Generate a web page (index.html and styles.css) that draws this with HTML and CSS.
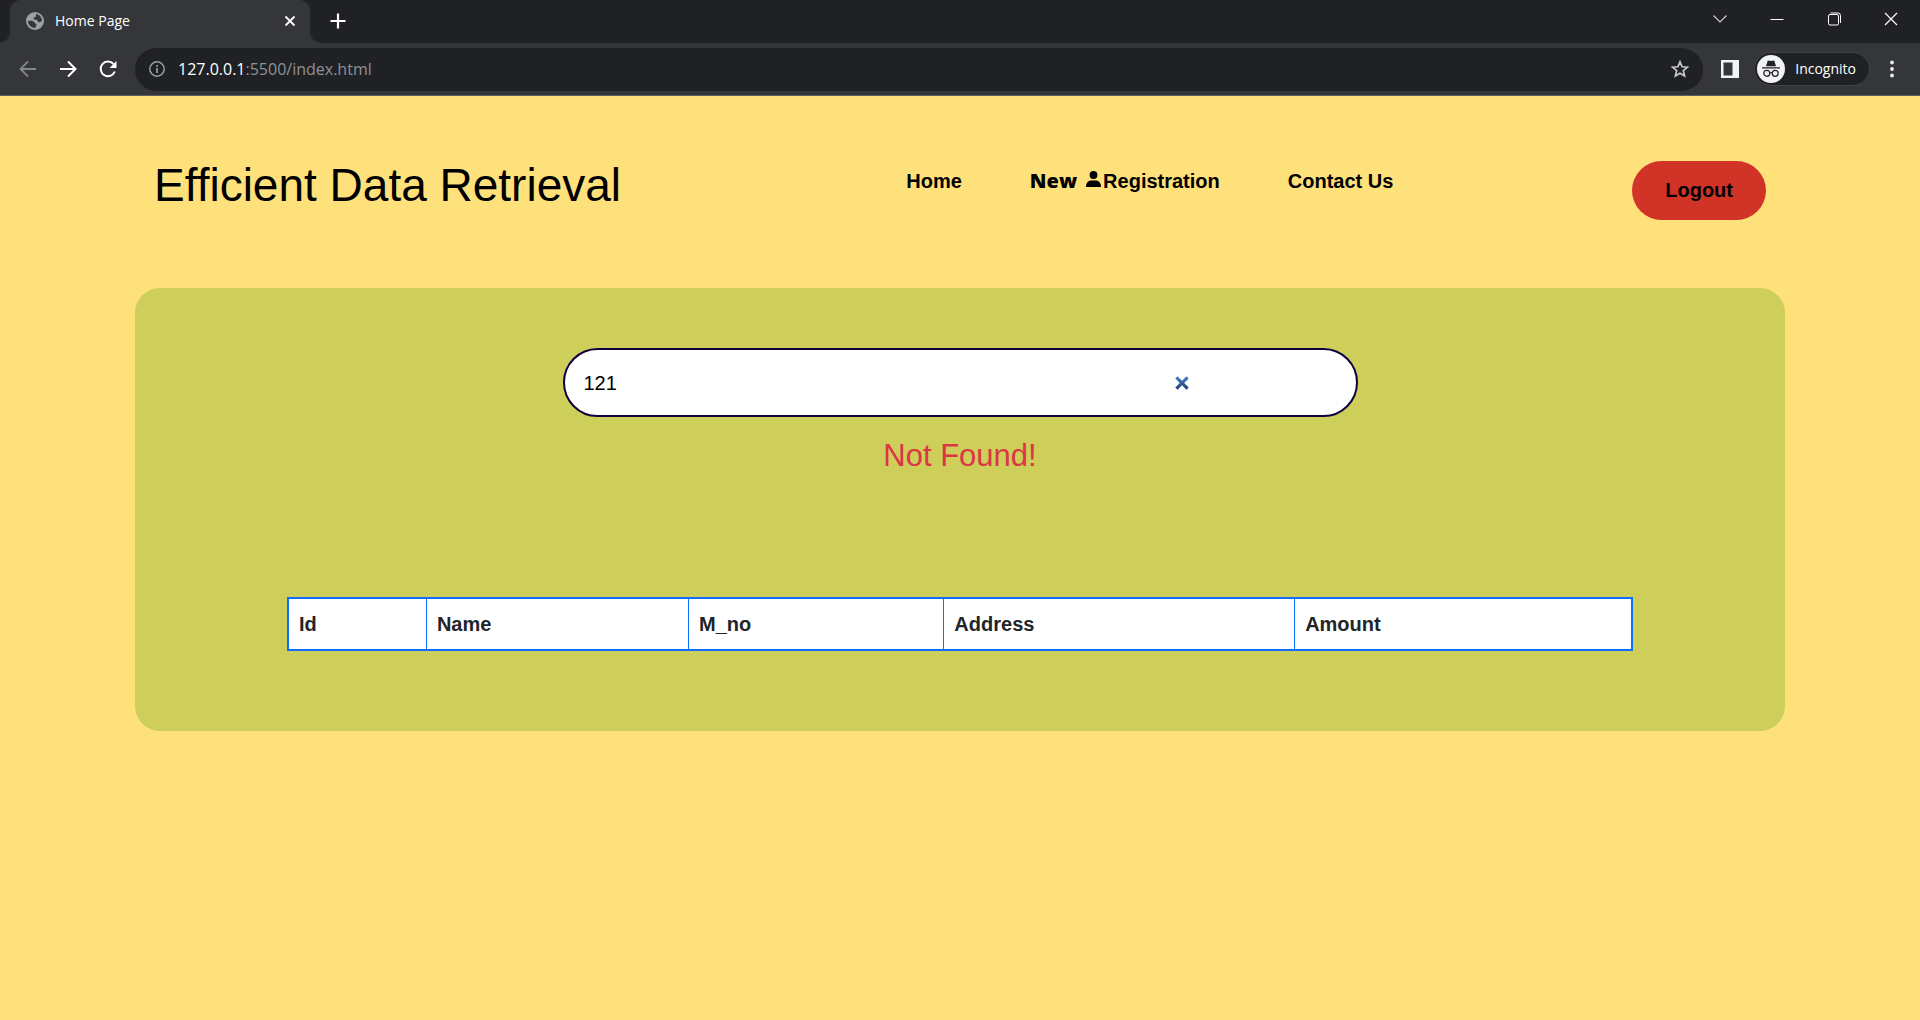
FILE: index.html
```html
<!DOCTYPE html>
<html lang="en">
<head>
<meta charset="utf-8">
<meta name="viewport" content="width=device-width, initial-scale=1">
<title>Home Page</title>
<link rel="stylesheet" href="styles.css">
</head>
<body>
<div class="browser">
  <div class="tab-strip">
    <div class="tab">
      <svg class="tab-icon" width="18" height="18" viewBox="0 0 18 18"><circle cx="9" cy="9" r="9" fill="#9aa0a6"/><path d="M2 9c2-.6 6-.4 6.500 1.500.2 1 1.500 1 2 2 .4 1-1 1.500-1 3.300C5.500 16 2 13 2 9zM10 2c3 .3 5.500 3 6 6-.5 1.500-1.500 2.500-3 2.200-1.700-.4-1-2.200-2.500-2.400C8.500 7.600 7.500 7.500 7.600 6.200 7.700 5 9.800 5.300 10 4.200z" fill="#35363a"/></svg>
      <span class="tab-title">Home Page</span>
      <button class="icon-button" aria-label="Close tab"><svg width="12" height="12" viewBox="0 0 12 12"><path d="M1.500 1.500l9 9m0-9l-9 9" stroke="#fff" stroke-width="1.800"/></svg></button>
    </div>
    <button class="icon-button new-tab" aria-label="New tab"><svg width="16" height="16" viewBox="0 0 16 16"><path d="M8 .5v15M.5 8h15" stroke="#fff" stroke-width="2.200"/></svg></button>
    <div class="window-buttons">
      <button class="icon-button" aria-label="Search tabs"><svg width="14" height="14" viewBox="0 0 14 14"><path d="M.5 3.500L7 10l6.500-6.500" fill="none" stroke="#ccc" stroke-width="1.200"/></svg></button>
      <button class="icon-button" aria-label="Minimize"><svg width="14" height="14" viewBox="0 0 14 14"><path d="M.5 7.500h13" stroke="#fff"/></svg></button>
      <button class="icon-button" aria-label="Restore"><svg width="14" height="14" viewBox="0 0 14 14"><g fill="none" stroke="#fff"><rect x="1.500" y="2.500" width="10" height="10.500" rx="1.500"/><path d="M3.500 1h7.500a2.500 2.500 0 0 1 2.500 2.500V11"/></g></svg></button>
      <button class="icon-button" aria-label="Close window"><svg width="14" height="14" viewBox="0 0 14 14"><path d="M1 1l12 12M13 1L1 13" stroke="#fff" stroke-width="1.200"/></svg></button>
    </div>
  </div>
  <div class="toolbar">
    <div class="history">
      <button class="icon-button" aria-label="Back"><svg width="18" height="18" viewBox="0 0 18 18"><path d="M17 9H2m7-7.500L1.500 9 9 16.500" fill="none" stroke="#85868a" stroke-width="1.800"/></svg></button>
      <button class="icon-button" aria-label="Forward"><svg width="18" height="18" viewBox="0 0 18 18"><path d="M1 9h15M9 1.500L16.500 9 9 16.500" fill="none" stroke="#fff" stroke-width="2"/></svg></button>
      <button class="icon-button" aria-label="Reload"><svg width="18" height="18" viewBox="0 0 18 18"><path d="M14.500 4A7.300 7.300 0 1 0 15.800 11.500" fill="none" stroke="#fff" stroke-width="2"/><path d="M17.500 1v7h-7z" fill="#fff"/></svg></button>
    </div>
    <div class="address-bar">
      <svg width="16" height="16" viewBox="0 0 16 16"><circle cx="8" cy="8" r="7.200" fill="none" stroke="#9aa0a6" stroke-width="1.500"/><path d="M8 7v5M8 4v1.700" stroke="#9aa0a6" stroke-width="1.700"/></svg>
      <span class="address"><span class="address-host">127.0.0.1</span>:5500/index.html</span>
      <button class="icon-button" aria-label="Bookmark"><svg width="18" height="18" viewBox="0 0 18 18"><path d="M9 1.800l2.100 5 5.300.4-4.100 3.500 1.300 5.300L9 13.200 4.400 16l1.300-5.300-4.100-3.500 5.300-.4z" fill="none" stroke="#c8cacd" stroke-width="1.700"/></svg></button>
    </div>
    <button class="icon-button side-panel" aria-label="Side panel"><svg width="18" height="18" viewBox="0 0 18 18"><path d="M0 0h18v18H0zM2.500 2.500v13h9v-13z" fill="#f1f3f4" fill-rule="evenodd"/></svg></button>
    <button class="incognito">
      <svg width="28" height="28" viewBox="0 0 28 28"><circle cx="14" cy="14" r="14" fill="#f1f3f4"/><path d="M10.800 5.500l3.200.5 3.200-.5 1.800 5.700H9zM5 12.300h18v1.200H5z" fill="#202124"/><g fill="none" stroke="#202124" stroke-width="1.200"><circle cx="9.800" cy="18.300" r="3"/><circle cx="18.200" cy="18.300" r="3"/><path d="M12.800 18q1.200-1 2.400 0"/></g></svg>
      Incognito
    </button>
    <button class="icon-button menu" aria-label="Menu"><svg width="6" height="18" viewBox="0 0 6 18" fill="#e8eaed"><circle cx="3" cy="2.500" r="1.900"/><circle cx="3" cy="9" r="1.900"/><circle cx="3" cy="15.500" r="1.900"/></svg></button>
  </div>
</div>

<div class="page">
  <header class="header">
    <h1 class="title">Efficient Data Retrieval</h1>
    <div class="header-side">
      <nav class="nav">
        <a href="#">Home</a>
        <a href="#" class="registration"><span class="new">New</span><svg class="user-icon" width="15" height="16" viewBox="0 0 15 16"><circle cx="7.500" cy="4" r="3.900"/><path d="M0 16c0-4 2-6.500 5.500-6.500h4C13 9.500 15 12 15 16z"/></svg>Registration</a>
        <a href="#">Contact Us</a>
      </nav>
      <button class="logout">Logout</button>
    </div>
  </header>
  <main class="panel">
    <form class="search">
      <input class="search-input" type="text" value="121" aria-label="Search by id">
      <button class="icon-button" type="button" aria-label="Clear"><svg width="14" height="14" viewBox="0 0 14 14"><defs><linearGradient id="clear" x1="0" y1="0" x2="0" y2="1"><stop offset="0" stop-color="#4a83d4"/><stop offset="1" stop-color="#213b6b"/></linearGradient></defs><path d="M2.500.3L7 4.800 11.500.3l2.200 2.200L9.200 7l4.500 4.500-2.200 2.200L7 9.200l-4.500 4.500L.3 11.500 4.800 7 .3 2.500z" fill="url(#clear)"/></svg></button>
    </form>
    <p class="message">Not Found!</p>
    <table class="results">
      <colgroup><col class="col-id"><col class="col-name"><col class="col-phone"><col class="col-address"><col></colgroup>
      <thead>
        <tr><th scope="col">Id</th><th scope="col">Name</th><th scope="col">M_no</th><th scope="col">Address</th><th scope="col">Amount</th></tr>
      </thead>
    </table>
  </main>
</div>
</body>
</html>
```
FILE: styles.css
```css
* { box-sizing: border-box; }

body {
  margin: 0;
  min-height: 100vh;
  background: #ffe17b;
  color: #000;
  font: 20px/24px "Liberation Sans", Arial, sans-serif;
}

svg { display: block; flex: none; }

.icon-button {
  display: flex;
  align-items: center;
  justify-content: center;
  padding: 0;
  border: 0;
  background: none;
}

/* Browser window */
.browser {
  color: #fff;
  font-family: "Open Sans", "Noto Sans", sans-serif;
}

.tab-strip {
  display: flex;
  align-items: flex-start;
  height: 43px;
  padding-left: 10px;
  background: #202124;
}

.tab {
  position: relative;
  display: flex;
  align-items: center;
  gap: 11px;
  width: 300px;
  height: 43px;
  padding: 0 14px 2px 16px;
  border-radius: 10px 10px 0 0;
  background: #35363a;
}

/* Curved feet where the tab meets the toolbar */
.tab::before,
.tab::after {
  content: "";
  position: absolute;
  bottom: 0;
  width: 10px;
  height: 10px;
}

.tab::before {
  right: 100%;
  background: radial-gradient(circle at 0 0, #202124 9px, #35363a 10px);
}

.tab::after {
  left: 100%;
  background: radial-gradient(circle at 100% 0, #202124 9px, #35363a 10px);
}

.tab-title {
  flex: 1;
  font-size: 14px;
}

.new-tab {
  margin-left: 20px;
  height: 42px;
}

.window-buttons {
  display: flex;
  gap: 43px;
  margin-left: auto;
  padding-right: 22px;
}

.window-buttons .icon-button { height: 37px; }

.toolbar {
  display: flex;
  align-items: center;
  height: 53px;
  padding: 0 25px 0 19px;
  border-bottom: 1px solid #5d5e62;
  background: #35363a;
}

.history {
  display: flex;
  gap: 22px;
  margin-right: 18px;
}

.address-bar {
  display: flex;
  flex: 1;
  align-items: center;
  gap: 12px;
  height: 43px;
  padding: 0 14px;
  border-radius: 22px;
  background: #202124;
}

.address {
  flex: 1;
  padding-left: 1px;
  color: #8e9195;
  font-size: 16px;
}

.address-host { color: #fff; }

.side-panel { margin: 0 15px 0 18px; }

.incognito {
  display: flex;
  align-items: center;
  gap: 10px;
  height: 34px;
  padding: 0 13px 0 2px;
  border: 1px solid #414246;
  border-radius: 17px;
  background: #202124;
  color: #fff;
  font: 14px/20px "Open Sans", "Noto Sans", sans-serif;
}

.menu { margin-left: 19px; }

/* Page */
.page { padding: 65px 135px 0; }

.header {
  display: grid;
  grid-template-columns: 7fr 8fr;
  padding: 0 19px;
}

.title {
  margin: 0;
  font-size: 46px;
  font-weight: 400;
  font-variant-ligatures: none;
  line-height: 48px;
  white-space: nowrap;
}

.header-side {
  display: flex;
  align-items: flex-start;
  justify-content: space-between;
}

.nav {
  display: flex;
  gap: 68px;
  padding-top: 8px;
  font-weight: 700;
}

.nav a {
  color: #000;
  text-decoration: none;
  white-space: nowrap;
}

.registration {
  display: flex;
}

.new {
  font-family: "Open Sans", "Noto Sans", sans-serif;
  font-weight: 800;
}

.user-icon { margin: 2px 2px 0 9px; }

.logout {
  height: 59px;
  padding: 0 33px 2px;
  border: 0;
  border-radius: 30px;
  background: #d23327;
  color: #000;
  font: 700 20px/24px "Liberation Sans", Arial, sans-serif;
}

.panel {
  display: flex;
  flex-direction: column;
  align-items: center;
  margin-top: 68px;
  padding: 60px 0 80px;
  border-radius: 25px;
  background: #cece5a;
}

.search {
  display: flex;
  align-items: center;
  width: 795px;
  max-width: 90%;
  height: 69px;
  padding: 0 167px 0 19px;
  border: 2px solid #10003f;
  border-radius: 35px;
  background: #fff;
}

.search-input {
  flex: 1;
  min-width: 0;
  padding: 0;
  border: 0;
  outline: 0;
  background: none;
  color: #000;
  font: 20px/24px "Liberation Sans", Arial, sans-serif;
}

.message {
  margin: 21px 0 123px;
  color: #dc3545;
  font-size: 31px;
  line-height: 36px;
}

.results {
  width: 82%;
  max-width: 1346px;
  border: 2px solid #0d6efd;
  border-collapse: collapse;
  table-layout: fixed;
  background: #fff;
  color: #212529;
}

.results th {
  height: 52px;
  padding: 0 10px;
  border: 1px solid #0d6efd;
  text-align: left;
}

.results thead { border: 2px solid #0d6efd; }
.col-id { width: 10.3%; }
.col-name { width: 19.5%; }
.col-phone { width: 19%; }
.col-address { width: 26.1%; }
```
